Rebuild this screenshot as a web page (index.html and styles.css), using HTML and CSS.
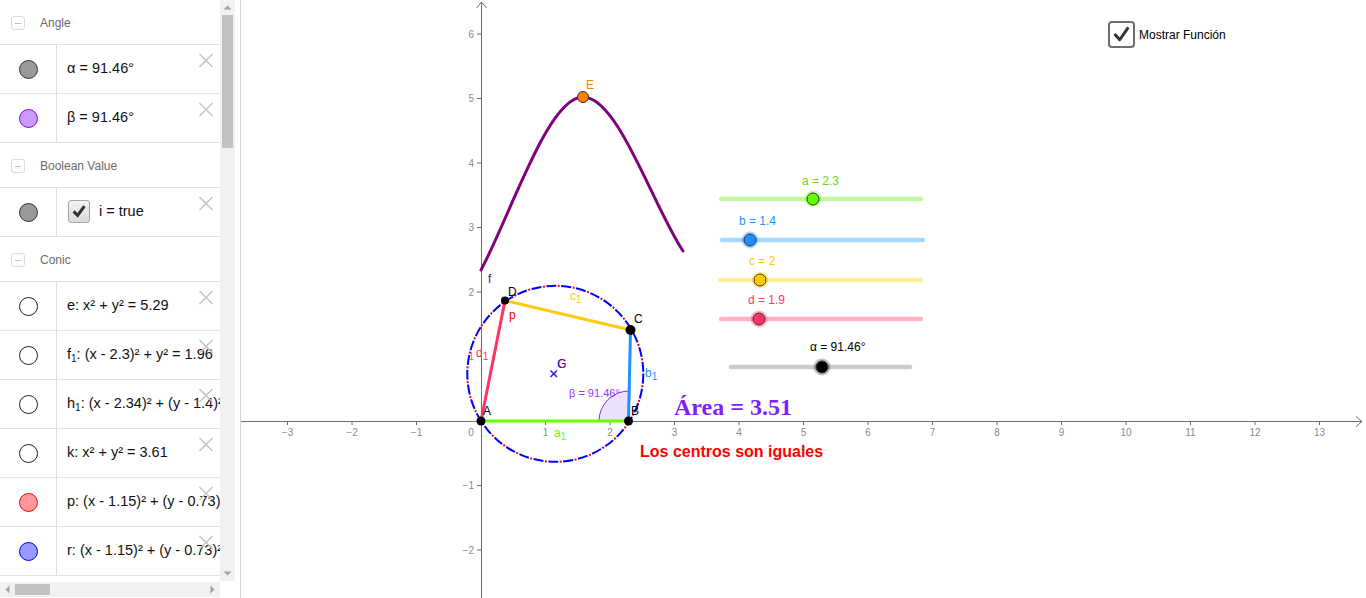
FILE: index.html
```html
<!DOCTYPE html>
<html>
<head>
<meta charset="utf-8">
<link rel="stylesheet" href="styles.css">
</head>
<body>
<div class="app">
  <aside class="algebra">
    <div class="list">
      <div class="group"><span class="collapse"></span><span class="gtitle">Angle</span></div>
      <div class="item"><div class="marker"><span class="dot d-gray"></span></div><div class="content"><span class="expr">α = 91.46°</span></div><svg class="del" viewBox="0 0 16 16"><path d="M1 1L15 15M15 1L1 15"/></svg></div>
      <div class="item"><div class="marker"><span class="dot d-violet"></span></div><div class="content"><span class="expr">β = 91.46°</span></div><svg class="del" viewBox="0 0 16 16"><path d="M1 1L15 15M15 1L1 15"/></svg></div>
      <div class="group"><span class="collapse"></span><span class="gtitle">Boolean Value</span></div>
      <div class="item"><div class="marker"><span class="dot d-gray"></span></div><div class="content"><span class="cbox"><svg viewBox="0 0 20 20"><path d="M4 10.5L8.5 15L16 4.5"/></svg></span><span class="expr">i = true</span></div><svg class="del" viewBox="0 0 16 16"><path d="M1 1L15 15M15 1L1 15"/></svg></div>
      <div class="group"><span class="collapse"></span><span class="gtitle">Conic</span></div>
      <div class="item"><div class="marker"><span class="dot d-white"></span></div><div class="content"><span class="expr">e: x² + y² = 5.29</span></div><svg class="del" viewBox="0 0 16 16"><path d="M1 1L15 15M15 1L1 15"/></svg></div>
      <div class="item"><div class="marker"><span class="dot d-white"></span></div><div class="content"><span class="expr">f<sub>1</sub>: (x - 2.3)² + y² = 1.96</span></div><svg class="del" viewBox="0 0 16 16"><path d="M1 1L15 15M15 1L1 15"/></svg></div>
      <div class="item"><div class="marker"><span class="dot d-white"></span></div><div class="content"><span class="expr">h<sub>1</sub>: (x - 2.34)² + (y - 1.4)² = 1.96</span></div><svg class="del" viewBox="0 0 16 16"><path d="M1 1L15 15M15 1L1 15"/></svg></div>
      <div class="item"><div class="marker"><span class="dot d-white"></span></div><div class="content"><span class="expr">k: x² + y² = 3.61</span></div><svg class="del" viewBox="0 0 16 16"><path d="M1 1L15 15M15 1L1 15"/></svg></div>
      <div class="item"><div class="marker"><span class="dot d-red"></span></div><div class="content"><span class="expr">p: (x - 1.15)² + (y - 0.73)² = 1.86</span></div><svg class="del" viewBox="0 0 16 16"><path d="M1 1L15 15M15 1L1 15"/></svg></div>
      <div class="item"><div class="marker"><span class="dot d-blue"></span></div><div class="content"><span class="expr">r: (x - 1.15)² + (y - 0.73)² = 1.86</span></div><svg class="del" viewBox="0 0 16 16"><path d="M1 1L15 15M15 1L1 15"/></svg></div>
    </div>
    <div class="vscroll">
      <svg class="arr" viewBox="0 0 15 15"><path d="M3.5 9.5h8l-4-4z"/></svg>
      <span class="vthumb"></span>
      <span class="spacer"></span>
      <svg class="arr" viewBox="0 0 15 15"><path d="M3.5 5.5h8l-4 4z"/></svg>
    </div>
    <div class="hscroll">
      <svg class="harr" viewBox="0 0 15 15"><path d="M9.5 3.5v8l-4-4z"/></svg>
      <span class="hthumb"></span>
      <span class="spacer"></span>
      <svg class="harr" viewBox="0 0 15 15"><path d="M5.5 3.5v8l4-4z"/></svg>
    </div>
    <div class="corner"></div>
  </aside>
  <div class="splitter"></div>
  <main class="canvas">
    <svg class="graph" width="1125" height="598" viewBox="241 0 1125 598">
      <!-- axes -->
      <g class="axis">
        <path d="M241 421.5H1362M1356 416.5L1362 421.5L1356 426.5"/>
        <path d="M481.5 598V2M476.5 8L481.5 2L486.5 8"/>
        <path class="ticks" d="M287.5 421v4M352 421v4M416.5 421v4M545.5 421v4M610 421v4M674.5 421v4M739 421v4M803.5 421v4M868 421v4M932.5 421v4M997 421v4M1061.5 421v4M1126 421v4M1190.5 421v4M1255 421v4M1319.5 421v4M477 34h4M477 98.5h4M477 163h4M477 227.5h4M477 292h4M477 356.5h4M477 485.5h4M477 550h4"/>
      </g>
      <g class="tick">
        <text x="287.5" y="436">−3</text><text x="352" y="436">−2</text><text x="416.5" y="436">−1</text>
        <text x="471" y="436">0</text>
        <text x="545.5" y="436">1</text><text x="610" y="436">2</text><text x="674.5" y="436">3</text>
        <text x="739" y="436">4</text><text x="803.5" y="436">5</text><text x="868" y="436">6</text>
        <text x="932.5" y="436">7</text><text x="997" y="436">8</text><text x="1061.5" y="436">9</text>
        <text x="1126" y="436">10</text><text x="1190.5" y="436">11</text><text x="1255" y="436">12</text><text x="1319.5" y="436">13</text>
      </g>
      <g class="tick ytick">
        <text x="474" y="37.5">6</text><text x="474" y="102">5</text><text x="474" y="166.5">4</text>
        <text x="474" y="231">3</text><text x="474" y="295.5">2</text><text x="474" y="360">1</text>
        <text x="474" y="489">−1</text><text x="474" y="553.5">−2</text>
      </g>

      <!-- function f -->
      <path class="fn" d="M481 270C511 214 548 97 583 97C618 97 652 204 683 251"/>

      <!-- angle beta -->
      <path class="sector" d="M629 421H599A30 30 0 0 1 629.8 391Z"/>

      <!-- circles p and r -->
      <circle class="circ-r" cx="555.3" cy="373.8" r="88"/>
      <circle class="circ-p" cx="555.3" cy="373.8" r="88"/>

      <!-- quadrilateral -->
      <line class="seg sa" x1="481" y1="421" x2="628.5" y2="421"/>
      <line class="seg sb" x1="628.5" y1="421" x2="630.5" y2="330"/>
      <line class="seg sc" x1="630.5" y1="330" x2="505" y2="300.5"/>
      <line class="seg sd" x1="505" y1="300.5" x2="481" y2="421"/>

      <!-- center marker -->
      <path class="cross" d="M550.5 370.5L557 377M557 370.5L550.5 377"/>
      <text class="lbl blue" x="557" y="368">G</text>
      <text class="lbl red" x="558" y="367.5" opacity="0.6">C</text>

      <!-- points -->
      <circle class="pt" cx="481" cy="421" r="4.5"/>
      <circle class="pt" cx="628.5" cy="421" r="4.5"/>
      <circle class="pt" cx="630.5" cy="330" r="5"/>
      <circle class="pt" cx="505" cy="300.5" r="4"/>
      <circle class="ptE" cx="583" cy="97" r="5.5"/>

      <!-- labels -->
      <text class="lbl" x="483" y="415">A</text>
      <text class="lbl" x="631" y="415">B</text>
      <text class="lbl" x="634" y="323">C</text>
      <text class="lbl" x="508" y="296">D</text>
      <text class="lbl orange" x="586" y="89">E</text>
      <text class="lbl purple" x="488" y="283">f</text>
      <text class="lbl red" x="509" y="319">p</text>
      <text class="lbl green" x="554" y="437">a<tspan class="sub" dy="3">1</tspan></text>
      <text class="lbl blueseg" x="645" y="377">b<tspan class="sub" dy="3">1</tspan></text>
      <text class="lbl yellow" x="570" y="300">c<tspan class="sub" dy="3">1</tspan></text>
      <text class="lbl pink" x="476" y="357">d<tspan class="sub" dy="3">1</tspan></text>
      <text class="lbl violet small" x="569" y="397">β = 91.46°</text>

      <text class="area" x="674" y="415">Área = 3.51</text>
      <text class="centros" x="640" y="457">Los centros son iguales</text>

      <!-- sliders -->
      <g class="slider">
        <line class="track" x1="721" y1="199" x2="921" y2="199" stroke="#c4f7a4"/>
        <circle cx="813" cy="199" r="8.5" fill="#66ff00" opacity="0.35"/>
        <circle class="knob" cx="813" cy="199" r="6" fill="#66ff00"/>
        <text class="slbl" x="802" y="185" fill="#66e000">a = 2.3</text>
      </g>
      <g class="slider">
        <line class="track" x1="722" y1="240" x2="923" y2="240" stroke="#a6d9ff"/>
        <circle cx="750" cy="240" r="8.5" fill="#1e90ff" opacity="0.35"/>
        <circle class="knob" cx="750" cy="240" r="6" fill="#1e90ff"/>
        <text class="slbl" x="739" y="225" fill="#1e90ff">b = 1.4</text>
      </g>
      <g class="slider">
        <line class="track" x1="720" y1="280" x2="921" y2="280" stroke="#ffee9e"/>
        <circle cx="760" cy="280" r="8.5" fill="#ffcc00" opacity="0.35"/>
        <circle class="knob" cx="760" cy="280" r="6" fill="#ffcc00"/>
        <text class="slbl" x="749" y="265" fill="#ffcc00">c = 2</text>
      </g>
      <g class="slider">
        <line class="track" x1="721" y1="319" x2="921" y2="319" stroke="#ffb3c4"/>
        <circle cx="759" cy="319" r="8.5" fill="#ff3366" opacity="0.35"/>
        <circle class="knob" cx="759" cy="319" r="6" fill="#ff3366"/>
        <text class="slbl" x="748" y="304" fill="#ff3366">d = 1.9</text>
      </g>
      <g class="slider">
        <line class="track" x1="731" y1="367" x2="910" y2="367" stroke="#cccccc"/>
        <circle cx="822" cy="367" r="8.5" fill="#000" opacity="0.25"/>
        <circle class="knob" cx="822" cy="367" r="6" fill="#000"/>
        <text class="slbl" x="810" y="351" fill="#000">α = 91.46°</text>
      </g>
    </svg>
    <label class="showfn"><span class="bigbox"><svg viewBox="0 0 24 24"><path d="M5 12.5L10 18L19 5"/></svg></span>Mostrar Función</label>
  </main>
</div>
</body>
</html>
```
FILE: styles.css
```css
html, body {
  margin: 0;
  padding: 0;
  background: #fff;
}
body {
  width: 1366px;
  height: 598px;
  overflow: hidden;
  font-family: "Liberation Sans", Arial, sans-serif;
}
.app {
  display: flex;
  height: 598px;
}

/* ---------- algebra view ---------- */
.algebra {
  flex: none;
  width: 235px;
  display: grid;
  grid-template-columns: 220px 15px;
  grid-template-rows: 581px 17px;
}
.list {
  overflow: hidden;
}
.group {
  border-bottom: 1px solid #e3e3e3;
  display: flex;
  align-items: center;
  padding-top: 2px;
  box-sizing: border-box;
  height: 45px;
}
.collapse {
  width: 14px;
  height: 14px;
  margin-left: 11px;
  box-sizing: border-box;
  border: 1px solid #dcdcdc;
  border-radius: 3px;
  position: relative;
}
.collapse::after {
  content: "";
  position: absolute;
  left: 3px;
  right: 3px;
  top: 5.5px;
  height: 1px;
  background: #bdbdbd;
}
.gtitle {
  margin-left: 15px;
  font-size: 12px;
  color: #6b6b6b;
}
.item {
  position: relative;
  height: 48px;
  border-bottom: 1px solid #e3e3e3;
  display: flex;
}
.marker {
  flex: none;
  width: 56px;
  border-right: 1px solid #dedede;
  display: flex;
  align-items: center;
  justify-content: center;
}
.dot {
  width: 19px;
  height: 19px;
  border-radius: 50%;
  box-sizing: border-box;
  border: 1px solid #333;
}
.d-gray { background: #999; border-color: #333; }
.d-violet { background: #cc99ff; border-color: #7f00ff; }
.d-white { background: #fff; border-color: #222; }
.d-red { background: #ff9999; border-color: #ff0000; }
.d-blue { background: #9999ff; border-color: #0000ff; }
.content {
  flex: 1;
  min-width: 0;
  padding-left: 10px;
  padding-bottom: 2px;
  display: flex;
  align-items: center;
  overflow: hidden;
  white-space: nowrap;
  font-size: 14.5px;
  color: #111;
}
.expr {
  white-space: nowrap;
}
.expr sub {
  font-size: 10px;
  vertical-align: -3px;
  line-height: 0;
}
.cbox {
  flex: none;
  width: 22px;
  height: 23px;
  box-sizing: border-box;
  border: 1px solid #a5a5a5;
  border-radius: 3px;
  background: linear-gradient(#f4f4f4, #dadada);
  margin-right: 9px;
  margin-left: 1px;
  display: flex;
  align-items: center;
  justify-content: center;
}
.cbox svg {
  width: 18px;
  height: 18px;
}
.cbox path {
  fill: none;
  stroke: #333;
  stroke-width: 3.4;
}
.del {
  position: absolute;
  right: 6px;
  top: 8px;
  width: 16px;
  height: 15px;
}
.del path {
  stroke: #c6c6c6;
  stroke-width: 1.6;
  fill: none;
}

/* scrollbars */
.vscroll {
  background: #f1f1f1;
  display: flex;
  flex-direction: column;
  align-items: center;
}
.arr, .harr {
  flex: none;
  width: 15px;
  height: 15px;
}
.arr path, .harr path {
  fill: #a3a3a3;
}
.vthumb {
  width: 11px;
  height: 133px;
  background: #c1c1c1;
}
.spacer {
  flex: 1;
}
.hscroll {
  background: #f1f1f1;
  display: flex;
  align-items: center;
  height: 15px;
  margin-top: 1px;
}
.hthumb {
  width: 35px;
  height: 11px;
  background: #c1c1c1;
}
.corner {
  background: #fff;
}
.splitter {
  flex: none;
  width: 5px;
  border-right: 1px solid #d6d6d6;
}

/* ---------- graphics view ---------- */
.canvas {
  flex: 1;
  position: relative;
  overflow: hidden;
}
.graph {
  display: block;
}
.axis path {
  fill: none;
  stroke: #6d6d6d;
  stroke-width: 1;
}
.tick text {
  font-family: "Liberation Sans", Arial, sans-serif;
  font-size: 10px;
  fill: #8c8c8c;
  text-anchor: middle;
}
.ytick text {
  text-anchor: end;
}
.fn {
  fill: none;
  stroke: #800080;
  stroke-width: 3;
  stroke-linecap: round;
}
.sector {
  fill: #ece0ff;
  stroke: #8a2be2;
  stroke-width: 1;
}
.circ-r {
  fill: none;
  stroke: #0000ff;
  stroke-width: 2;
  stroke-dasharray: 10 5;
}
.circ-p {
  fill: none;
  stroke: #ff0000;
  stroke-width: 2;
  stroke-dasharray: 2 13;
  stroke-dashoffset: -11.5;
}
.seg {
  stroke-width: 3;
  stroke-linecap: butt;
}
.sa { stroke: #66ff00; }
.sb { stroke: #1e90ff; }
.sc { stroke: #ffcc00; }
.sd { stroke: #ff3366; }
.cross {
  stroke: #2020e0;
  stroke-width: 1.5;
  fill: none;
}
.pt {
  fill: #000;
}
.ptE {
  fill: #ff7f00;
  stroke: #333;
  stroke-width: 1;
}
.lbl {
  font-family: "Liberation Sans", Arial, sans-serif;
  font-size: 12px;
  fill: #000;
}
.lbl .sub {
  font-size: 10px;
}
.lbl.small { font-size: 11px; }
.orange { fill: #ff7f00; }
.purple { fill: #800080; }
.red { fill: #ff0000; }
.blue { fill: #0000ff; }
.green { fill: #66ff00; }
.blueseg { fill: #1e90ff; }
.yellow { fill: #ffcc00; }
.pink { fill: #ff3366; }
.violet { fill: #9933ff; }
.area {
  font-family: "Liberation Serif", "Times New Roman", serif;
  font-weight: bold;
  font-size: 24px;
  fill: #7f1fff;
}
.centros {
  font-family: "Liberation Sans", Arial, sans-serif;
  font-weight: bold;
  font-size: 16px;
  fill: #ff0000;
}
.track {
  stroke-width: 4.5;
  stroke-linecap: round;
}
.knob {
  stroke: #333;
  stroke-width: 1;
}
.slbl {
  font-family: "Liberation Sans", Arial, sans-serif;
  font-size: 12px;
}

/* show function checkbox */
.showfn {
  position: absolute;
  left: 867px;
  top: 21px;
  display: flex;
  align-items: center;
  font-size: 12px;
  color: #000;
}
.bigbox {
  width: 27px;
  height: 27px;
  box-sizing: border-box;
  border: 2px solid #6e6e6e;
  border-radius: 4px;
  background: #fff;
  display: flex;
  align-items: center;
  justify-content: center;
  margin-right: 4px;
}
.bigbox svg {
  width: 21px;
  height: 21px;
}
.bigbox path {
  fill: none;
  stroke: #333;
  stroke-width: 3.4;
  stroke-linecap: round;
  stroke-linejoin: round;
}
```
